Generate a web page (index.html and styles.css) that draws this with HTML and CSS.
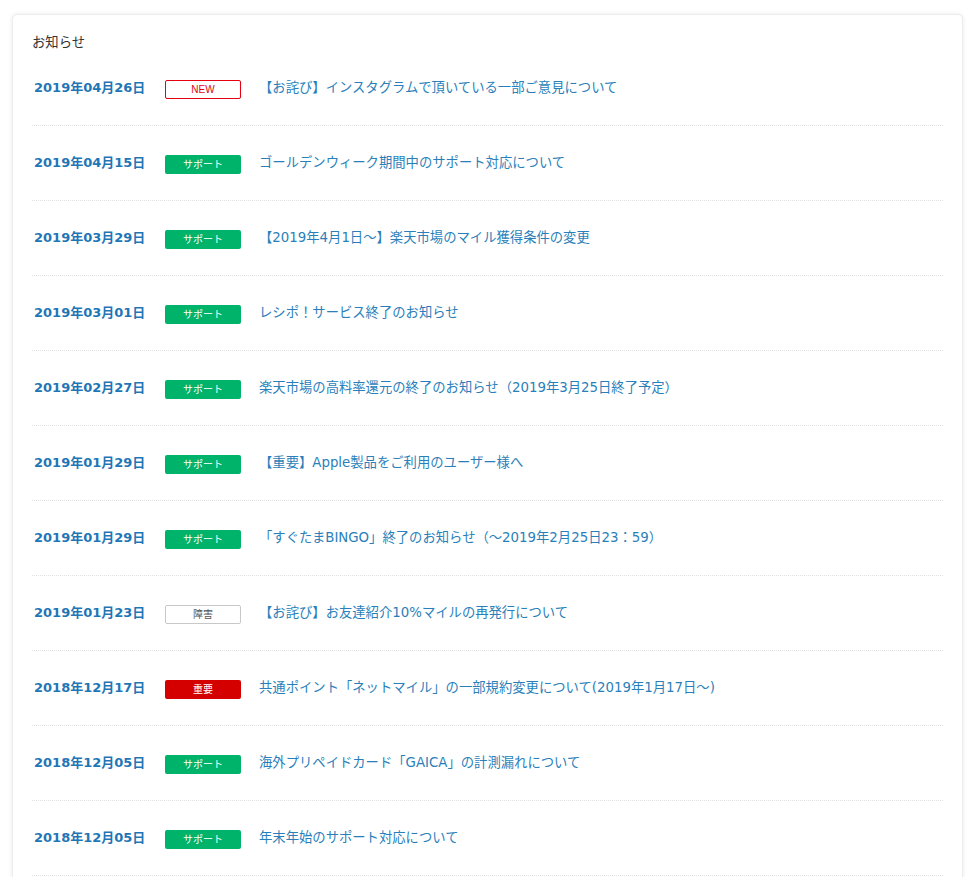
FILE: index.html
```html
<!DOCTYPE html>
<html lang="ja">
<head>
<meta charset="utf-8">
<link rel="stylesheet" href="styles.css">
</head>
<body>
<div class="card">
  <div class="heading">お知らせ</div>
  <ul class="news">
    <li class="row"><span class="date">2019年04月26日</span><span class="badge new">NEW</span><a class="title">【お詫び】インスタグラムで頂いている一部ご意見について</a></li>
    <li class="row"><span class="date">2019年04月15日</span><span class="badge support">サポート</span><a class="title">ゴールデンウィーク期間中のサポート対応について</a></li>
    <li class="row"><span class="date">2019年03月29日</span><span class="badge support">サポート</span><a class="title">【2019年4月1日～】楽天市場のマイル獲得条件の変更</a></li>
    <li class="row"><span class="date">2019年03月01日</span><span class="badge support">サポート</span><a class="title">レシポ！サービス終了のお知らせ</a></li>
    <li class="row"><span class="date">2019年02月27日</span><span class="badge support">サポート</span><a class="title">楽天市場の高料率還元の終了のお知らせ（2019年3月25日終了予定）</a></li>
    <li class="row"><span class="date">2019年01月29日</span><span class="badge support">サポート</span><a class="title">【重要】Apple製品をご利用のユーザー様へ</a></li>
    <li class="row"><span class="date">2019年01月29日</span><span class="badge support">サポート</span><a class="title">「すぐたまBINGO」終了のお知らせ（～2019年2月25日23：59）</a></li>
    <li class="row"><span class="date">2019年01月23日</span><span class="badge fault">障害</span><a class="title">【お詫び】お友達紹介10%マイルの再発行について</a></li>
    <li class="row"><span class="date">2018年12月17日</span><span class="badge important">重要</span><a class="title">共通ポイント「ネットマイル」の一部規約変更について(2019年1月17日～)</a></li>
    <li class="row"><span class="date">2018年12月05日</span><span class="badge support">サポート</span><a class="title">海外プリペイドカード「GAICA」の計測漏れについて</a></li>
    <li class="row"><span class="date">2018年12月05日</span><span class="badge support">サポート</span><a class="title">年末年始のサポート対応について</a></li>
  </ul>
</div>
</body>
</html>
```

FILE: styles.css
```css
html, body {
  margin: 0;
  padding: 0;
  background: #ffffff;
}
body {
  font-family: "DejaVu Sans", "Noto Sans CJK JP", sans-serif;
  padding: 14px 13px 0 12px;
  height: 877px;
  overflow: hidden;
  box-sizing: border-box;
}
.card {
  background: #fff;
  border: 1px solid #ececec;
  border-radius: 5px;
  box-shadow: 0 0 4px rgba(0, 0, 0, 0.08);
  padding: 20px 19px 20px 19px;
}
.heading {
  font-size: 13.33px;
  line-height: 16px;
  color: #333;
  height: 16px;
}
.news {
  list-style: none;
  margin: 0;
  padding: 0;
}
.row {
  display: flex;
  align-items: center;
  box-sizing: border-box;
  height: 75px;
  padding-bottom: 3px;
  border-bottom: 1px dotted #e2e2e2;
}
.date {
  width: 133px;
  padding-left: 2px;
  box-sizing: border-box;
  font-weight: bold;
  font-size: 13px;
  color: #1f76b6;
  flex: none;
}
.badge {
  flex: none;
  width: 76px;
  height: 19px;
  box-sizing: border-box;
  border-radius: 2px;
  font-size: 10px;
  line-height: 19px;
  text-align: center;
  margin-right: 18px;
  margin-top: 6px;
}
.badge.new {
  border: 1px solid #e60012;
  color: #e60012;
  line-height: 17px;
  font-family: "Liberation Sans", sans-serif;
}
.badge.support {
  background: #00b36b;
  color: #fff;
}
.badge.fault {
  border: 1px solid #c8c8c8;
  color: #555;
  line-height: 17px;
}
.badge.important {
  background: #d40000;
  color: #fff;
}
.title {
  font-size: 13.33px;
  color: #2a7fba;
  text-decoration: none;
  white-space: nowrap;
}
```
